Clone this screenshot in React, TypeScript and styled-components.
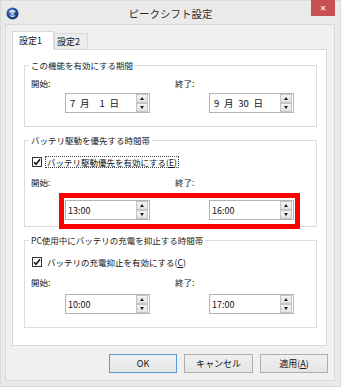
import styled, { createGlobalStyle } from "styled-components";

const GlobalStyle = createGlobalStyle`
  html, body {
    margin: 0;
    padding: 0;
    background: #ebebeb;
  }
  body {
    font-family: "Noto Sans CJK JP", "Liberation Sans", sans-serif;
    color: #111;
  }
`;

function AppIcon() {
  return (
    <svg width="13" height="13" viewBox="0 0 13 13">
      <defs>
        <radialGradient id="ball" cx="0.4" cy="0.35" r="0.7">
          <stop offset="0" stopColor="#6f9fd8" />
          <stop offset="0.55" stopColor="#1f4f98" />
          <stop offset="1" stopColor="#0d2d62" />
        </radialGradient>
      </defs>
      <circle cx="6.5" cy="6.5" r="6" fill="url(#ball)" />
      <path d="M4 5.2 A3 3 0 0 1 9 5.2" fill="none" stroke="#ffffff" strokeWidth="1.6" opacity="0.9" />
      <path d="M4.2 8.4 A3 3 0 0 0 8.8 8.4" fill="none" stroke="#dce9f8" strokeWidth="1.4" opacity="0.9" />
      <circle cx="6.5" cy="6.8" r="1.2" fill="#ffffff" opacity="0.8" />
    </svg>
  );
}

function CheckMark() {
  return (
    <svg width="8" height="8" viewBox="0 0 8 8">
      <path d="M1 4.2 L3 6.3 L7 1.2" fill="none" stroke="#111" strokeWidth="1.5" />
    </svg>
  );
}

function Spinner({ value, $date }: { value: string; $date?: boolean }) {
  return (
    <SpinBox>
      <SpinValue $date={$date}>{value}</SpinValue>
      <SpinButtons>
        <SpinButton>
          <Arrow $up />
        </SpinButton>
        <SpinButton>
          <Arrow />
        </SpinButton>
      </SpinButtons>
    </SpinBox>
  );
}

function TimeFields({ start, end, $date, $gap }: { start: string; end: string; $date?: boolean; $gap: number }) {
  return (
    <Fields>
      <Field>
        <FieldLabel>開始:</FieldLabel>
        <SpinSlot $gap={$gap}>
          <Spinner value={start} $date={$date} />
        </SpinSlot>
      </Field>
      <Field>
        <FieldLabel>終了:</FieldLabel>
        <SpinSlot $gap={$gap}>
          <Spinner value={end} $date={$date} />
        </SpinSlot>
      </Field>
    </Fields>
  );
}

// en space between parts, figure space pads the one-digit day
const startDate = "7\u2002月\u2002\u20071\u2002日";
const endDate = "9\u2002月\u200230\u2002日";

export default function App() {
  return (
    <>
      <GlobalStyle />
      <Window>
        <TitleBar>
          <IconCell>
            <AppIcon />
          </IconCell>
          <Title>ピークシフト設定</Title>
          <CloseButton>✕</CloseButton>
        </TitleBar>

        <Client>
          <TabStrip>
            <Tab $active>設定1</Tab>
            <Tab>設定2</Tab>
          </TabStrip>

          <Panel>
            <Group $bottom={13}>
              <Legend>この機能を有効にする期間</Legend>
              <TimeFields start={startDate} end={endDate} $date $gap={4} />
            </Group>

            <Group $bottom={6}>
              <Legend>バッテリ駆動を優先する時間帯</Legend>
              <CheckRow>
                <CheckBox>
                  <CheckMark />
                </CheckBox>
                <CheckLabel $focused>
                  バッテリ駆動優先を有効にする(<u>E</u>)
                </CheckLabel>
              </CheckRow>
              <Highlighted>
                <TimeFields start="13:00" end="16:00" $gap={12} />
                <RedFrame />
              </Highlighted>
            </Group>

            <Group $bottom={13}>
              <Legend>PC使用中にバッテリの充電を抑止する時間帯</Legend>
              <CheckRow>
                <CheckBox>
                  <CheckMark />
                </CheckBox>
                <CheckLabel>
                  バッテリの充電抑止を有効にする(<u>C</u>)
                </CheckLabel>
              </CheckRow>
              <TimeFields start="10:00" end="17:00" $gap={6} />
            </Group>
          </Panel>

          <ButtonRow>
            <DialogButton $default $width={68}>OK</DialogButton>
            <DialogButton $width={69}>キャンセル</DialogButton>
            <DialogButton $width={68}>
              適用(<u>A</u>)
            </DialogButton>
          </ButtonRow>
        </Client>
      </Window>
    </>
  );
}

const Window = styled.div`
  width: 341px;
  height: 387px;
  box-sizing: border-box;
  background: #eaeaea;
  border: 1px solid #dadada;
  display: flex;
  flex-direction: column;
`;

const TitleBar = styled.div`
  height: 23px;
  display: grid;
  grid-template-columns: 1fr auto 1fr;
  align-items: center;
`;

const IconCell = styled.div`
  display: flex;
  align-items: center;
  padding-left: 5px;
  padding-top: 1px;
`;

const Title = styled.div`
  font-size: 10.5px;
  color: #2b2b2b;
  padding-top: 2px;
`;

const CloseButton = styled.div`
  justify-self: end;
  align-self: start;
  width: 24px;
  height: 16px;
  margin-right: 5px;
  margin-top: -1px;
  background: #c75050;
  color: #fff;
  font-family: "DejaVu Sans", sans-serif;
  font-size: 8px;
  font-weight: bold;
  display: flex;
  align-items: center;
  justify-content: center;
`;

const Client = styled.div`
  box-sizing: border-box;
  flex: 1;
  margin: 0 5px 5px 4px;
  background: #f0f0f0;
  border: 1px solid #dadada;
  padding: 6px 0 0 6px;
`;

const TabStrip = styled.div`
  display: flex;
  align-items: flex-end;
  height: 18px;
`;

const Tab = styled.div<{ $active?: boolean }>`
  box-sizing: border-box;
  position: relative;
  z-index: ${(p) => (p.$active ? 1 : 0)};
  width: ${(p) => (p.$active ? 42 : 34)}px;
  height: ${(p) => (p.$active ? 19 : 16)}px;
  margin-bottom: ${(p) => (p.$active ? -1 : 0)}px;
  padding: ${(p) => (p.$active ? "0 0 2px 6px" : "0 0 0 2px")};
  border: 1px solid #d9d9d9;
  border-bottom: none;
  background: ${(p) => (p.$active ? "#ffffff" : "#ececec")};
  font-size: 9px;
  display: flex;
  align-items: center;
`;

const Panel = styled.div`
  box-sizing: border-box;
  width: 315px;
  height: 297px;
  background: #ffffff;
  border: 1px solid #d9d9d9;
  padding: 9px 9px 0 11px;
  display: flex;
  flex-direction: column;
  gap: 7px;
`;

const Group = styled.fieldset<{ $bottom: number }>`
  margin: 0;
  min-width: 0;
  border: 1px solid #dcdcdc;
  padding: 6px 8px ${(p) => p.$bottom}px 6px;
`;

const Legend = styled.legend`
  margin-left: -2px;
  padding: 0 2px;
  font-size: 8.5px;
  line-height: 12px;
  color: #1a1a1a;
`;

const CheckRow = styled.div`
  display: flex;
  align-items: center;
  height: 14px;
  margin: 3px 0 7px 1px;
`;

const CheckBox = styled.div`
  box-sizing: border-box;
  width: 10px;
  height: 10px;
  border: 1px solid #333;
  background: #fff;
  display: flex;
  align-items: center;
  justify-content: center;
`;

const CheckLabel = styled.div<{ $focused?: boolean }>`
  margin-left: 3px;
  padding: 0 1px;
  font-size: 8.5px;
  line-height: 10px;
  border: 1px dotted ${(p) => (p.$focused ? "#444" : "transparent")};
`;

const Fields = styled.div`
  display: grid;
  grid-template-columns: 144px 1fr;
`;

const Field = styled.div`
  display: flex;
  flex-direction: column;
`;

const FieldLabel = styled.div`
  font-size: 8.5px;
  line-height: 12px;
`;

const SpinSlot = styled.div<{ $gap: number }>`
  margin: ${(p) => p.$gap}px 0 0 34px;
`;

const SpinBox = styled.div`
  box-sizing: border-box;
  width: 85px;
  height: 20px;
  border: 1px solid #b3b3b3;
  background: #fff;
  display: flex;
  align-items: center;
  justify-content: space-between;
`;

const SpinValue = styled.span<{ $date?: boolean }>`
  padding-left: ${(p) => (p.$date ? 4 : 2)}px;
  font-size: ${(p) => (p.$date ? 9.5 : 9)}px;
  white-space: pre;
  color: #111;
`;

const SpinButtons = styled.div`
  display: flex;
  flex-direction: column;
  margin-right: 1px;
`;

const SpinButton = styled.div`
  box-sizing: border-box;
  width: 12px;
  height: 9px;
  border: 1px solid #c4c4c4;
  background: linear-gradient(#f4f4f4, #e2e2e2);
  display: flex;
  align-items: center;
  justify-content: center;
`;

const Arrow = styled.span<{ $up?: boolean }>`
  width: 0;
  height: 0;
  border-left: 2.5px solid transparent;
  border-right: 2.5px solid transparent;
  ${(p) => (p.$up ? "border-bottom: 3px solid #222;" : "border-top: 3px solid #222;")}
`;

const Highlighted = styled.div`
  position: relative;
`;

const RedFrame = styled.div`
  position: absolute;
  left: 28px;
  top: 17px;
  width: 241px;
  height: 36px;
  box-sizing: border-box;
  border: 5px solid #ff0000;
  pointer-events: none;
`;

const ButtonRow = styled.div`
  width: 316px;
  margin-top: 8px;
  display: flex;
  justify-content: flex-end;
  gap: 7px;
`;

const DialogButton = styled.div<{ $default?: boolean; $width: number }>`
  box-sizing: border-box;
  width: ${(p) => p.$width}px;
  height: 19px;
  border: 1px solid ${(p) => (p.$default ? "#5b9bd8" : "#adadad")};
  background: linear-gradient(#f0f0f0, #e5e5e5);
  font-size: 9px;
  display: flex;
  align-items: center;
  justify-content: center;
  color: #111;
`;
